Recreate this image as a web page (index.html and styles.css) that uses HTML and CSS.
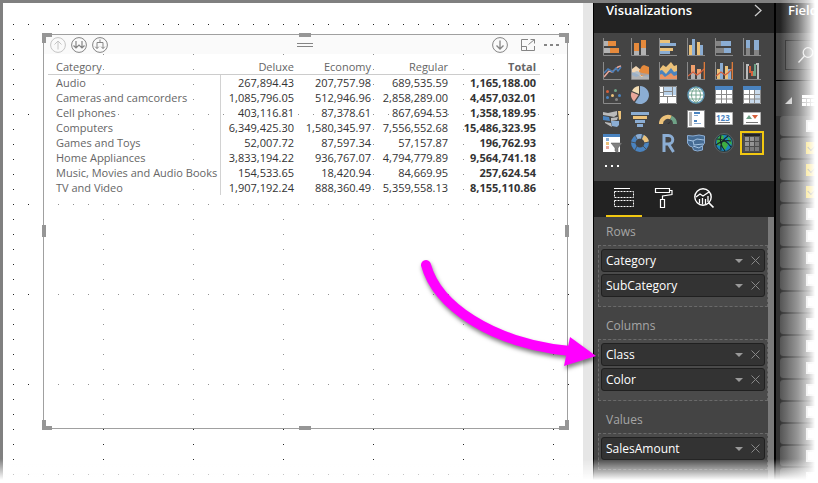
FILE: index.html
```html
<!DOCTYPE html>
<html lang="en">
<head>
<meta charset="utf-8">
<title>Report</title>
<link rel="stylesheet" href="styles.css">
</head>
<body>
<div class="app">
  <main class="canvas">
    <div class="page">
      <section class="visual">
        <span class="corner tl"></span><span class="corner tr"></span><span class="corner bl"></span><span class="corner br"></span>
        <span class="handle top"></span><span class="handle bottom"></span><span class="handle left"></span><span class="handle right"></span>
        <header class="visual-bar">
          <div class="drill">
            <button class="faded" aria-label="Drill up"><svg width="16" height="16" viewBox="0 0 16 16"><circle cx="8" cy="8" r="7.4"/><path d="M8 12.5V4M4.500 7.500L8 4l3.500 3.500"/></svg></button>
            <button aria-label="Go to the next level"><svg width="16" height="16" viewBox="0 0 16 16"><circle cx="8" cy="8" r="7.400"/><path d="M5 4v7M11 4v7M2.500 8.500L5 11l3-3 3 3 2.500-2.500" stroke-width="1.200"/></svg></button>
            <button aria-label="Expand all down"><svg width="16" height="16" viewBox="0 0 16 16"><circle cx="8" cy="8" r="7.400"/><path d="M8 2.500v3M5 11.500v-6h6v6M3.200 9.700L5 11.500l1.800-1.800M9.200 9.700l1.800 1.800 1.800-1.800"/></svg></button>
          </div>
          <svg class="grip" width="16" height="6" viewBox="0 0 16 6"><path d="M0 1.500h16M0 4.500h16"/></svg>
          <div class="actions">
            <button aria-label="Drill down"><svg width="16" height="16" viewBox="0 0 16 16"><circle cx="8" cy="8" r="7.400"/><path d="M8 3.500V12M4.500 8.500L8 12l3.500-3.500" stroke-width="1.300"/></svg></button>
            <button aria-label="Focus mode"><svg width="16" height="14" viewBox="0 0 16 14"><path d="M8 1.500H1.500v11h13V8M1.500 8.500h5v4M8.500 6.500l6-5M10.500 1.500h4v4"/></svg></button>
            <button aria-label="More options"><svg width="16" height="4" viewBox="0 0 16 4"><path class="solid" d="M0 1h3v2H0zM6 1h3v2H6zM12 1h3v2h-3z"/></svg></button>
          </div>
        </header>
        <table class="matrix">
          <thead><tr><th>Category</th><th>Deluxe</th><th>Economy</th><th>Regular</th><th class="total">Total</th></tr></thead>
          <tbody>
            <tr><th>Audio</th><td>267,894.43</td><td>207,757.98</td><td>689,535.59</td><td>1,165,188.00</td></tr>
            <tr><th>Cameras and camcorders</th><td>1,085,796.05</td><td>512,946.96</td><td>2,858,289.00</td><td>4,457,032.01</td></tr>
            <tr><th>Cell phones</th><td>403,116.81</td><td>87,378.61</td><td>867,694.53</td><td>1,358,189.95</td></tr>
            <tr><th>Computers</th><td>6,349,425.30</td><td>1,580,345.97</td><td>7,556,552.68</td><td>15,486,323.95</td></tr>
            <tr><th>Games and Toys</th><td>52,007.72</td><td>87,597.34</td><td>57,157.87</td><td>196,762.93</td></tr>
            <tr><th>Home Appliances</th><td>3,833,194.22</td><td>936,767.07</td><td>4,794,779.89</td><td>9,564,741.18</td></tr>
            <tr><th>Music, Movies and Audio Books</th><td>154,533.65</td><td>18,420.94</td><td>84,669.95</td><td>257,624.54</td></tr>
            <tr><th>TV and Video</th><td>1,907,192.24</td><td>888,360.49</td><td>5,359,558.13</td><td>8,155,110.86</td></tr>
          </tbody>
        </table>
      </section>
    </div>
  </main>

  <aside class="viz">
    <header class="pane-head"><h2>Visualizations</h2>
      <button aria-label="Collapse pane"><svg width="8" height="13" viewBox="0 0 8 13"><path d="M1 1l6 5.500L1 12" fill="none" stroke="#ccc" stroke-width="1.300"/></svg></button>
    </header>
    <div class="gallery">
      <button aria-label="Stacked bar chart"><svg viewBox="0 0 18 18"><path fill="#b3b3b3" d="M1 3h4v5H1zM1 10h6v5H1z"/><path fill="#e68a3c" d="M5 3h8v5H5zM7 10h9v5H7z"/><path class="axis" d="M.5 0v17.500H18"/></svg></button>
      <button aria-label="Stacked column chart"><svg viewBox="0 0 18 18"><path fill="#b3b3b3" d="M3 13h5v4H3zM10 10h5v7h-5z"/><path fill="#e68a3c" d="M3 5h5v8H3zM10 2h5v8h-5z"/><path class="axis" d="M.5 0v17.500H18"/></svg></button>
      <button aria-label="Clustered bar chart"><svg viewBox="0 0 18 18"><path fill="#ecc27a" d="M1 2h10v3H1zM1 10h13v3H1z"/><path fill="#8badd3" d="M1 5h16v3H1zM1 13h10v3H1z"/><path class="axis" d="M.5 0v17.500H18"/></svg></button>
      <button aria-label="Clustered column chart"><svg viewBox="0 0 18 18"><path fill="#ecc27a" d="M2 7h3v10H2zM10 4h3v13h-3z"/><path fill="#8badd3" d="M5 1h3v16H5zM13 7h3v10h-3z"/><path class="axis" d="M.5 0v17.500H18"/></svg></button>
      <button aria-label="100% stacked bar chart"><svg viewBox="0 0 18 18"><path fill="#858585" d="M1 3h5v5H1zM1 10h8v5H1z"/><path fill="#8badd3" d="M6 3h10v5H6zM9 10h7v5H9z"/><path class="axis" d="M.5 0v17.500H18"/></svg></button>
      <button aria-label="100% stacked column chart"><svg viewBox="0 0 18 18"><path fill="#858585" d="M3 10h4v7H3zM11 12h5v5h-5z"/><path fill="#8badd3" d="M3 2h4v8H3zM11 2h5v10h-5z"/><path class="axis" d="M.5 0v17.500H18"/></svg></button>

      <button aria-label="Line chart"><svg viewBox="0 0 18 18"><path d="M1 15l5-6 3 1 6-5 3-1" fill="none" stroke="#e9a79a" stroke-width="1.500"/><path d="M1 11l4-4 5 3 3-4 2 3 3-4" fill="none" stroke="#4a7fb9" stroke-width="1.500"/><path class="axis" d="M.5 0v17.500H18"/></svg></button>
      <button aria-label="Area chart"><svg viewBox="0 0 18 18"><path fill="#b3b3b3" d="M1 8h17v9H1z"/><path fill="#f3d6b2" d="M1 7l4-3 5 4 4 3-3 4-5-3-5-2z"/><path fill="#e68a3c" d="M8 9l3-5 2-1 5 2v8l-8 1z"/><path fill="#8badd3" opacity=".6" d="M1 11l5-2 5 2 7 1v3l-8-2-5 2-4-2z"/><path class="axis" d="M.5 0v17.500H18"/></svg></button>
      <button aria-label="Stacked area chart"><svg viewBox="0 0 18 18"><path fill="#ecc27a" d="M0 8l4-5 3 2 5-5 3 4 3-1v9H0z"/><path fill="#4a83bf" d="M0 9l3-1 4 4 5-6 3 4 3-1v6H0z"/><path fill="#e99463" d="M0 13l3-1 3 3 6-4 3 3 3-1v4H0z"/><path class="axis" d="M.5 0v17.500H18"/></svg></button>
      <button aria-label="Line and stacked column chart"><svg viewBox="0 0 18 18"><path fill="#f0a06d" d="M4 3h4v7H4zM10 7h4v5h-4z"/><path fill="#b3b3b3" d="M4 10h4v7H4zM10 12h4v5h-4z"/><path d="M1 14l5-4 4 3 3-2 4-4" fill="none" stroke="#d6603b" stroke-width="1.200"/><path class="axis" d="M.5 0v17.500H18"/><path d="M17.300 0v17" stroke="#ee8139" stroke-width="1.200"/></svg></button>
      <button aria-label="Line and clustered column chart"><svg viewBox="0 0 18 18"><path fill="#ecc27a" d="M2 7h3v10H2zM10 4h3v13h-3z"/><path fill="#8badd3" d="M5 1h3v16H5zM13 7h3v10h-3z"/><path d="M1 14l5-4 4 3 3-2 4-4" fill="none" stroke="#d6603b" stroke-width="1.200"/><path class="axis" d="M.5 0v17.500H18"/><path d="M17.300 0v17" stroke="#ee8139" stroke-width="1.200"/></svg></button>
      <button aria-label="Waterfall chart"><svg viewBox="0 0 18 18"><path fill="#bbb" d="M3 2h3v2H5v13H3zM13 1h3v16h-2V3h-1z"/><path fill="#d6603b" d="M6 4h2v5h2v5H8v-3H6z"/><path fill="#6fa287" d="M10 9h1V2h2v12h-3z"/><path class="axis" d="M.5 0v17.500H18"/></svg></button>

      <button aria-label="Scatter chart"><svg viewBox="0 0 18 18"><path class="axis" d="M.5 0v17.500H18"/><g fill="#d6603b"><circle cx="4.500" cy="5.500" r="1.500"/><circle cx="16.500" cy="9.500" r="1.500" fill="#4a83bf"/><circle cx="12.500" cy="4.500" r="1.500" fill="#6fa287"/><circle cx="9.500" cy="9.500" r="1.500" fill="#ecc27a"/><circle cx="4.500" cy="11.500" r="1.500" fill="#4a83bf"/><circle cx="13.500" cy="13.500" r="1.500" fill="#858585"/></g></svg></button>
      <button aria-label="Pie chart"><svg viewBox="0 0 18 18"><path fill="#8badd3" d="M9 9V0a9 9 0 1 1-5 16.500z"/><path fill="#f2dcb4" d="M8 8L1 5a8 8 0 0 1 7-5z"/><path fill="#e9a79a" d="M7.500 9L3 15.500A9 9 0 0 1 .5 6z"/></svg></button>
      <button aria-label="Treemap"><svg viewBox="0 0 18 18"><path fill="#fff" d="M0 0h18v18H0z"/><path fill="#b9d2ea" d="M5 1h8v8H5zM14 1h3v8h-3z"/><path fill="none" stroke="#858585" d="M.5.5h17v17H.5zM4.500 1v9.500M1 10.500h16M13.500 1v9.500M5 5.500h8M8.500 11v6M1 6.500h4"/></svg></button>
      <button aria-label="Map"><svg viewBox="0 0 18 18"><circle cx="9" cy="9" r="8" fill="#fff" stroke="#5f99b8" stroke-width="1.500"/><path d="M9 1v16M1 9h16M2 5h14M2 13h14M9 1C3 5 3 13 9 17C15 13 15 5 9 1" fill="none" stroke="#78a792"/></svg></button>
      <button aria-label="Table"><svg viewBox="0 0 18 18"><path fill="#fff" d="M0 0h18v18H0z"/><path fill="#4a83bf" d="M0 0h18v4H0z"/><path class="axis" d="M.5 4v13.500h17V4M6.500 4v13M11.500 4v13M1 8.500h16M1 13h16"/></svg></button>
      <button aria-label="Matrix"><svg viewBox="0 0 18 18"><path fill="#fff" d="M0 0h18v18H0z"/><path fill="#c8daec" d="M12 4h5v13h-5zM6 13h6v4H6z"/><path fill="#4a83bf" d="M0 0h18v4H0z"/><path class="axis" d="M.5 4v13.500h17V4M6.500 4v13M11.500 4v13M1 8.500h16M1 13h16"/></svg></button>

      <button aria-label="Filled map"><svg viewBox="0 0 18 18"><path fill="#bbb" d="M0 2l5 1 9-2v4l-3 2-5-1-6-1zM2 12l6 1 1 4-2-1-5-3z"/><path fill="#4a83bf" d="M0 6l6 1 1 4-7-1z"/><path fill="#8badd3" d="M8 11h8v4l-2 2-5-1z"/><path fill="#ecc27a" d="M15 1h3v8l-2 1z"/><path fill="#bbb" d="M8 8l7-1-1 3-6 1z"/></svg></button>
      <button aria-label="Funnel"><svg viewBox="0 0 18 18"><path fill="#8badd3" d="M0 2h18v3H0zM4 10h10v3H4zM6 14h6v3H6z"/><path fill="#ecc27a" d="M2 6h14v3H2z"/></svg></button>
      <button aria-label="Gauge"><svg viewBox="0 0 18 18"><path d="M2 14a7 7 0 0 1 10-6.500" fill="none" stroke="#ecc27a" stroke-width="4"/><path d="M12 7.500a7 7 0 0 1 4 6.500" fill="none" stroke="#6fa287" stroke-width="4"/><path d="M8 14l5-4-3 4z" fill="#333"/></svg></button>
      <button aria-label="Multi-row card"><svg viewBox="0 0 18 18"><path fill="#fff" stroke="#8a8a8a" d="M.5.5h17v17H.5z"/><path fill="#b3b3b3" d="M2 2h3v14H2z"/><path fill="#4a83bf" d="M7 2h6v2H7zM7 10h3v2H7z"/><path fill="#8badd3" d="M7 5h4v1H7zM7 13h7v1H7z"/></svg></button>
      <button aria-label="Card"><svg viewBox="0 0 18 18"><path fill="#fff" stroke="#b3b3b3" d="M.5 2.500h17v12H.5z"/><text x="1" y="11">123</text><path fill="#777" d="M3 12h12v1H3z"/></svg></button>
      <button aria-label="KPI"><svg viewBox="0 0 18 18"><path fill="#fff" stroke="#b3b3b3" d="M.5 2.500h17v12H.5z"/><path fill="#6fa287" d="M3 9l3-4 3 4z"/><path fill="#d6603b" d="M9 5h6l-3 4z"/><path fill="#777" d="M3 12h12v1H3z"/></svg></button>

      <button aria-label="Slicer"><svg viewBox="0 0 18 18"><path fill="#fff" d="M0 0h17v18H0z"/><path fill="#4a83bf" d="M0 0h17v3H0z"/><path fill="#8badd3" d="M3 4h3v3H3z"/><path fill="#ecc27a" d="M3 8h3v3H3z"/><path fill="#e9a79a" d="M3 12h3v3H3z"/><path fill="#808080" stroke="#555" stroke-width=".5" d="M8 9h11l-4 5v5l-3-2v-3z"/></svg></button>
      <button aria-label="Donut chart"><svg viewBox="0 0 18 18"><g fill="none" stroke-width="4.500"><circle cx="9" cy="9" r="6.700" stroke="#4a83bf"/><path d="M5 3.500A6.700 6.700 0 0 1 11 2.500" stroke="#8badd3"/><path d="M12 3a7 7 0 0 1 3.700 5" stroke="#ecc27a"/></g><path d="M11.500 0l-1 5M18 8l-5 1M15 15l-3-3M4 16l2-4M0 8l5 1M4 1l2 4" stroke="#444" stroke-width=".8"/></svg></button>
      <button aria-label="R script visual"><svg viewBox="0 0 18 18"><path d="M5 18V1.500h4.500a4 4 0 0 1 0 8.500H5M9.500 10l5 8" fill="none" stroke="#8badd3" stroke-width="3"/></svg></button>
      <button aria-label="Shape map"><svg viewBox="0 0 18 18"><path fill="#466c94" stroke="#8badd3" d="M.5 1.500L6 2l6-1 5.500 1v7l-2 3v4l-5 1-4-1-1-3-3-1L.5 9z"/><path fill="none" stroke="#a5c4e2" d="M1 6l5 1 4-2 7 1M6 7l1 4 9-1M6 12l6 2 3-2"/></svg></button>
      <button aria-label="ArcGIS maps"><svg viewBox="0 0 18 18"><circle cx="9" cy="9" r="9.500" fill="#263d42" stroke="#777" stroke-width=".6"/><circle cx="9" cy="9" r="8" fill="#1a87bd"/><path fill="#3fad42" d="M2 5l4-4 3 1-1 4 3 1 2 4-3 5-4-4-4-1zM12 2l4 4 1 5-3-2z"/><path d="M2 5c5 0 10 2 14 8M1 11c4-3 10-5 15-4M6 1c-2 6 0 11 4 16M13 2c-6 4-8 9-7 14" fill="none" stroke="#16232a" stroke-width="1.100"/></svg></button>
      <button class="selected" aria-label="Matrix preview"><svg viewBox="0 0 18 18"><path fill="#4c4c4c" d="M0 0h18v18H0z"/><path fill="#222" d="M1 0h16v2H1z"/><path fill="#969696" d="M2 3h4v4H2zM7 3h4v4H7zM2 8h4v4H2zM7 8h4v4H7z"/><path fill="#7c7c7c" d="M12 3h4v4h-4zM12 8h4v4h-4zM2 13h4v4H2zM7 13h4v4H7zM12 13h4v4h-4z"/></svg></button>
      <button class="more" aria-label="Import a custom visual"><svg viewBox="0 0 18 18"><path fill="#fff" d="M2 7h2v2H2zM8 7h2v2H8zM14 7h2v2h-2z"/></svg></button>
    </div>

    <nav class="tabs">
      <button class="active" aria-label="Fields"><svg width="20" height="20" viewBox="0 0 20 20"><path d="M0 .5h16"/><path d="M.5 3.500h19v6H.5zM.5 12.500h19v6H.5z" stroke-dasharray="2 1"/></svg></button>
      <button aria-label="Format"><svg width="20" height="20" viewBox="0 0 20 20"><path d="M1.500.5h14v4h-14zM15.500 2.500h2.500v4L8.500 8v3M6.500 11.500h4v8h-4z" stroke-width="1.200"/></svg></button>
      <button aria-label="Analytics"><svg width="20" height="20" viewBox="0 0 20 20"><circle cx="9" cy="9" r="8.200" stroke-width="1.400"/><path d="M2 9l4-3 3 2 6-4M5.500 15.500V11M8.500 16.500V10M11.500 16V11M14 14V8" stroke-width="1.300"/><path d="M14.500 14.500l5 5" stroke-width="1.700"/></svg></button>
    </nav>

    <div class="wells">
      <section><h3>Rows</h3>
        <div class="well">
          <div class="field"><span>Category</span><button class="caret" aria-label="Category options"></button><button class="remove" aria-label="Remove Category"><svg viewBox="0 0 9 9"><path d="M.5.5l8 8M8.500.5l-8 8"/></svg></button></div>
          <div class="field"><span>SubCategory</span><button class="caret" aria-label="SubCategory options"></button><button class="remove" aria-label="Remove SubCategory"><svg viewBox="0 0 9 9"><path d="M.5.5l8 8M8.500.5l-8 8"/></svg></button></div>
        </div></section>
      <section><h3>Columns</h3>
        <div class="well">
          <div class="field"><span>Class</span><button class="caret" aria-label="Class options"></button><button class="remove" aria-label="Remove Class"><svg viewBox="0 0 9 9"><path d="M.5.5l8 8M8.500.5l-8 8"/></svg></button></div>
          <div class="field"><span>Color</span><button class="caret" aria-label="Color options"></button><button class="remove" aria-label="Remove Color"><svg viewBox="0 0 9 9"><path d="M.5.5l8 8M8.500.5l-8 8"/></svg></button></div>
        </div></section>
      <section><h3>Values</h3>
        <div class="well">
          <div class="field"><span>SalesAmount</span><button class="caret" aria-label="SalesAmount options"></button><button class="remove" aria-label="Remove SalesAmount"><svg viewBox="0 0 9 9"><path d="M.5.5l8 8M8.500.5l-8 8"/></svg></button></div>
        </div></section>
    </div>
  </aside>

  <aside class="fields">
    <header class="pane-head"><h2>Fields</h2></header>
    <div class="search"><button aria-label="Search"><svg width="16" height="16" viewBox="0 0 16 16"><circle cx="10" cy="5.500" r="4.800"/><path d="M6.500 9L.5 15.500"/></svg></button></div>
    <div class="source">
      <svg width="7" height="7" viewBox="0 0 7 7"><path fill="#ccc" d="M7 0v7H0z"/></svg>
      <svg width="13" height="11" viewBox="0 0 13 11"><path fill="#fff" d="M0 0h13v11H0z"/><path d="M0 3.500h13M0 7.500h13M4.500 3v8M8.500 3v8" stroke="#888"/></svg>
    </div>
    <div class="list">
      <label><input type="checkbox" aria-label="Field 1"></label>
      <label><input type="checkbox" aria-label="Field 2" checked></label>
      <label><input type="checkbox" aria-label="Field 3" checked></label>
      <label><input type="checkbox" aria-label="Field 4" checked></label>
      <label><input type="checkbox" aria-label="Field 5"></label>
      <label><input type="checkbox" aria-label="Field 6"></label>
      <label><input type="checkbox" aria-label="Field 7"></label>
      <label><input type="checkbox" aria-label="Field 8"></label>
      <label><input type="checkbox" aria-label="Field 9"></label>
      <label><input type="checkbox" aria-label="Field 10"></label>
      <label><input type="checkbox" aria-label="Field 11"></label>
      <label><input type="checkbox" aria-label="Field 12"></label>
      <label><input type="checkbox" aria-label="Field 13"></label>
      <label><input type="checkbox" aria-label="Field 14"></label>
      <label><input type="checkbox" aria-label="Field 15"></label>
      <label><input type="checkbox" aria-label="Field 16"></label>
      <label><input type="checkbox" aria-label="Field 17"></label>
    </div>
  </aside>
</div>
<svg class="pointer" width="190" height="120" viewBox="415 255 190 120"><path d="M426 265C437 305 490 343 570 351" fill="none" stroke="#f0f" stroke-width="10" stroke-linecap="round"/><path d="M570 337l26 19-32 10z" fill="#f0f"/></svg>
<div class="fade"></div>
</body>
</html>
```
FILE: styles.css
```css
* { box-sizing: border-box; }
body {
  margin: 0;
  background: #fff;
  font: 12px/15px "Open Sans", "Noto Sans", sans-serif;
}
h2, h3 { margin: 0; }
button { padding: 0; border: 0; background: none; color: inherit; font: inherit; }
svg { display: block; overflow: visible; }

.app {
  display: grid;
  grid-template-columns: 1fr 182px 43px;
  height: 100vh;
  overflow: hidden;
  border-top: 3px solid #808080;
  border-left: 3px solid #808080;
}

/* report canvas */
.canvas { display: flex; padding-right: 10px; background: #e6e6e6; }
.page {
  position: relative;
  flex: 1;
  padding: 31px 15px 54px 40px;
  background: #fff;
}
.page::before {
  content: "";
  position: absolute;
  inset: 21px 14px 0 10px;
  background:
    conic-gradient(at 1px 1px, transparent 270deg, #222 0) 0 0 / 15px 90px,
    conic-gradient(at 1px 1px, transparent 270deg, #222 0) 0 0 / 90px 15px;
}
.visual {
  position: relative;
  height: 100%;
  border: 1px solid #a0a0a0;
  background: rgba(255, 255, 255, .5);
  color: #666;
}
.corner, .handle { position: absolute; }
.corner { width: 10px; height: 10px; border: 0 solid #969696; }
.tl { top: -2px; left: -2px; border-width: 4px 0 0 4px; }
.tr { top: -2px; right: -2px; border-width: 4px 4px 0 0; }
.bl { bottom: -2px; left: -2px; border-width: 0 0 4px 4px; }
.br { bottom: -2px; right: -2px; border-width: 0 4px 4px 0; }
.handle { background: #969696; }
.top, .bottom { width: 12px; height: 4px; left: calc(50% - 7px); }
.left, .right { width: 4px; height: 12px; top: calc(50% - 7px); }
.top { top: -2px; }
.bottom { bottom: -2px; }
.left { left: -2px; }
.right { right: -2px; }

.visual-bar {
  display: grid;
  grid-template-columns: 1fr auto 1fr;
  align-items: center;
  height: 19px;
  padding: 0 7px 0 6px;
  background: #fafafa;
}
.visual-bar svg { fill: none; stroke: #858585; }
.visual-bar .solid { fill: #858585; stroke: none; }
.drill, .actions { display: flex; align-items: center; gap: 5px; }
.actions { justify-content: flex-end; gap: 12px; }
.actions button:last-child { margin-left: -4px; }
.faded { opacity: .45; }

.matrix {
  width: 492px;
  margin: 4px 0 0 4px;
  border-collapse: separate;
  border-spacing: 0;
  table-layout: fixed;
  font-size: 11px;
}
.matrix th, .matrix td { height: 15px; padding: 0 4px 0 0; text-align: right; font-weight: 400; white-space: nowrap; }
.matrix thead th { height: 17px; border-bottom: 1px solid #ccc; }
.matrix thead .total { font-weight: 700; }
.matrix th:first-child { width: 173px; padding-left: 8px; text-align: left; }
.matrix th:nth-child(n+2) { width: 77px; }
.matrix thead .total { width: 88px; }
.matrix tbody th { border-right: 1px solid #d2d2d2; }
.matrix td { color: #333; }
.matrix td:last-child { font-weight: 700; }

/* side panes */
.viz, .fields { background: #444; color: #fff; border-left: 1px solid #000; min-width: 0; }
.viz { display: flex; flex-direction: column; overflow: hidden; border-right: 1px solid #000; }
.pane-head {
  display: flex;
  justify-content: space-between;
  flex: none;
  height: 30px;
  padding: 0 12px;
  background: #222;
}
.pane-head h2 { font-size: 13px; line-height: 14px; font-weight: 600; }
.pane-head button { height: 14px; }
.gallery {
  display: grid;
  grid-template-columns: repeat(6, 18px);
  grid-auto-rows: 18px;
  gap: 6px 10px;
  flex: none;
  height: 148px;
  padding: 5px 9px;
}
.gallery svg { width: 18px; height: 18px; }
.gallery .axis { fill: none; stroke: #8a8a8a; }
.gallery text { font: 700 8px/8px "Open Sans", sans-serif; fill: #4a83bf; }
.selected { outline: 2px solid #f2c811; outline-offset: 1px; }

.tabs { display: flex; gap: 4px; flex: none; height: 36px; padding: 0 12px; background: #222; }
.tabs button { display: grid; place-items: center; width: 36px; border-bottom: 2px solid transparent; }
.tabs .active { border-color: #f2c811; }
.tabs svg { fill: none; stroke: #fff; }

.wells { flex: 1; padding-left: 4px; border-right: 6px solid #7a7a7a; }
.wells h3 { padding: 7px 8px 6px; color: #a6a6a6; font-size: 12px; line-height: 15px; font-weight: 400; }
.well {
  display: flex;
  flex-direction: column;
  gap: 2px;
  margin-bottom: 4px;
  padding: 3px 2px 9px;
  border: 1px dashed #6a6a6a;
  background: #4a4a4a;
}
.field {
  display: flex;
  align-items: center;
  height: 23px;
  padding: 0 4px;
  border: 1px solid #202020;
  border-radius: 3px;
  background: #333;
  font-weight: 500;
}
.field span { flex: 1; }
.caret { border: 4px solid transparent; border-top-color: #999; border-bottom: 0; }
.remove { margin-left: 8px; }
.remove svg { width: 9px; height: 9px; fill: none; stroke: #888; }

.fields { overflow: hidden; }
.search { margin: 7px 0 10px 9px; height: 30px; padding: 6px 0 0 12px; border: 1px solid #222; border-right: 0; background: #4a4a4a; }
.search svg { fill: none; stroke: #ddd; stroke-width: 1.3; }
.source { display: flex; align-items: center; gap: 10px; height: 36px; padding: 4px 0 0 9px; border-top: 1px solid #000; }
.list { display: grid; gap: 2px; padding-left: 4px; background: #333; }
.list label {
  display: flex;
  align-items: center;
  height: 20px;
  padding-left: 26px;
  border-radius: 3px 0 0 3px;
  background: #555;
}
.list input { appearance: none; width: 12px; height: 12px; margin: 0; background: #fff; border: 2px solid #ddd; }
.list input:checked { background: #f2c811; border-color: #f2c811; }
.list input:checked::before { content: ""; display: block; width: 7px; height: 4px; border: solid #333; border-width: 0 0 1px 1px; transform: rotate(-45deg); }

/* overlays */
.pointer { position: absolute; left: 415px; top: 255px; filter: drop-shadow(1px 3px 2px rgba(0, 0, 0, .5)); }
.fade {
  position: fixed;
  inset: 0;
  pointer-events: none;
  background:
    linear-gradient(to top, #fff 3px, rgba(255, 255, 255, .9) 5px, transparent 24px),
    linear-gradient(to left, #fff 3px, rgba(255, 255, 255, .75) 9px, rgba(255, 255, 255, .4) 20px, transparent 38px);
}
```
